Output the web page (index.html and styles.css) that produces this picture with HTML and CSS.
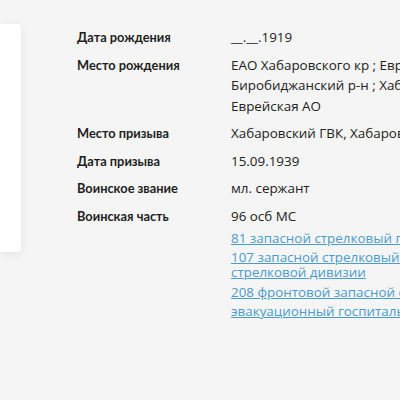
FILE: index.html
```html
<!DOCTYPE html>
<html lang="ru">
<head>
<meta charset="utf-8">
<link rel="stylesheet" href="styles.css">
</head>
<body>
<div class="page">
  <aside class="card"></aside>
  <dl class="info">
    <dt>Дата рождения</dt>
    <dd>__.__.1919</dd>
    <dt>Место рождения</dt>
    <dd><span class="line">ЕАО Хабаровского кр ; Еврейская АО,</span><span class="line">Биробиджанский р-н ; Хабаровский край,</span><span class="line">Еврейская АО</span></dd>
    <dt>Место призыва</dt>
    <dd><span class="line">Хабаровский ГВК, Хабаровский край, г. Хабаровск</span></dd>
    <dt>Дата призыва</dt>
    <dd>15.09.1939</dd>
    <dt>Воинское звание</dt>
    <dd>мл. сержант</dd>
    <dt>Воинская часть</dt>
    <dd>
      <span class="line">96 осб МС</span>
      <a class="link" href="#"><span class="line">81 запасной стрелковый полк</span></a>
      <a class="link" href="#"><span class="line">107 запасной стрелковый полк 34 запасной</span><span class="line">стрелковой дивизии</span></a>
      <a class="link" href="#"><span class="line">208 фронтовой запасной стрелковый полк</span></a>
      <a class="link" href="#"><span class="line">эвакуационный госпиталь 1490</span></a>
    </dd>
  </dl>
</div>
</body>
</html>
```
FILE: styles.css
```css
html, body {
  margin: 0;
  padding: 0;
  background: #f5f5f5;
  overflow: hidden;
}
.page {
  display: flex;
  align-items: flex-start;
  font-family: "Open Sans", "Noto Sans", sans-serif;
  font-size: 13.4px;
  color: #222;
}
.card {
  flex: 0 0 21px;
  height: 228px;
  margin-top: 24px;
  background: #fff;
  border-radius: 0 4px 4px 0;
  box-shadow: 0 2px 10px rgba(0,0,0,0.08);
}
.info {
  display: grid;
  grid-template-columns: 154px 340px;
  row-gap: 7px;
  margin: 27px 0 0 56px;
  flex: 0 0 auto;
}
.info dt {
  font-family: Lato, "Open Sans", sans-serif;
  font-weight: 700;
  font-size: 12.8px;
  line-height: 20px;
  color: #1e1e1e;
}
.info dd {
  margin: 0;
  line-height: 20.5px;
}
.line {
  display: block;
  white-space: nowrap;
}
.link {
  display: block;
  color: #4a9ccb;
  line-height: 15px;
  margin-top: 4.5px;
  text-decoration: underline;
}
```
